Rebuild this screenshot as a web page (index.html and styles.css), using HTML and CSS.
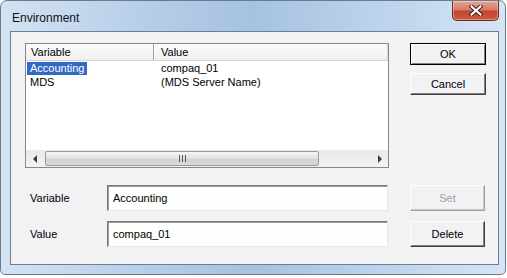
FILE: index.html
```html
<!DOCTYPE html>
<html lang="en">
<head>
    <meta charset="UTF-8">
    <title>Environment</title>
    <link rel="stylesheet" href="styles.css">
</head>
<body>
    <div class="window">
        <div class="titlebar">
            <span class="title">Environment</span>
            <button class="close" aria-label="Close">
                <svg width="14" height="11" viewBox="0 0 14 11">
                    <path d="M2.5 1.5 L11.5 9.5 M11.5 1.5 L2.5 9.5" stroke="#3b1d16" stroke-width="4" stroke-linecap="square"/>
                    <path d="M2.5 1.5 L11.5 9.5 M11.5 1.5 L2.5 9.5" stroke="#ffffff" stroke-width="2.2" stroke-linecap="square"/>
                </svg>
            </button>
        </div>
        <div class="client">
            <div class="top-row">
                <div class="listview">
                    <div class="lv-header">
                        <div class="lv-col col-var">Variable</div>
                        <div class="lv-col col-val">Value</div>
                    </div>
                    <div class="lv-body">
                        <div class="lv-row">
                            <div class="cell col-var"><span class="sel">Accounting</span></div>
                            <div class="cell col-val">compaq_01</div>
                        </div>
                        <div class="lv-row">
                            <div class="cell col-var"><span>MDS</span></div>
                            <div class="cell col-val">(MDS Server Name)</div>
                        </div>
                    </div>
                    <div class="hscroll">
                        <div class="arrow"><span class="tri-left"></span></div>
                        <div class="track">
                            <div class="thumb"><span class="grip"></span></div>
                        </div>
                        <div class="arrow"><span class="tri-right"></span></div>
                    </div>
                </div>
                <div class="btn-col">
                    <button class="btn default">OK</button>
                    <button class="btn">Cancel</button>
                </div>
            </div>
            <div class="field-row">
                <label for="variable">Variable</label>
                <input type="text" id="variable" value="Accounting">
                <button class="btn tall" disabled>Set</button>
            </div>
            <div class="field-row">
                <label for="value">Value</label>
                <input type="text" id="value" value="compaq_01">
                <button class="btn tall">Delete</button>
            </div>
        </div>
    </div>
</body>
</html>
```

FILE: styles.css
```css
body {
    margin: 0;
    background-color: #fff;
    font-family: "Liberation Sans", Arial, sans-serif;
    font-size: 11px;
    color: #000;
}
.window {
    box-sizing: border-box;
    width: 506px;
    height: 275px;
    border: 1px solid #6c7a89;
    border-radius: 7px 7px 5px 5px;
    background: linear-gradient(to right, #d3e3f4 0%, #b5cde8 30%, #a6c2e0 50%, #bcd3ec 75%, #d6e5f5 100%);
    padding-bottom: 8px;
}
.titlebar {
    display: flex;
    align-items: flex-start;
    height: 30px;
}
.title {
    font-size: 12px;
    margin: 10px 0 0 11px;
    color: #111;
}
.close {
    margin: 0 6px 0 auto;
    width: 47px;
    height: 20px;
    border: 1px solid #6a2b22;
    border-top: none;
    border-radius: 0 0 5px 5px;
    background: linear-gradient(#e6a795 0%, #d47a66 45%, #c24431 55%, #cf5a3d 100%);
    box-shadow: inset 0 0 0 1px rgba(255, 255, 255, 0.35);
    padding: 0;
    display: flex;
    align-items: center;
    justify-content: center;
}
.client {
    margin: 0 6px 0 9px;
    border: 1px solid #6d7e92;
    background-color: #f2f1f4;
    padding: 11px 11px 17px 14px;
}
.top-row {
    display: flex;
    gap: 21px;
    margin-bottom: 17px;
}
.listview {
    box-sizing: border-box;
    width: 364px;
    height: 125px;
    border: 1px solid #828790;
    background-color: #fff;
    display: flex;
    flex-direction: column;
}
.lv-header {
    display: flex;
    height: 17px;
    line-height: 16px;
    background: linear-gradient(#fbfbfb, #f0f0f0);
    border-bottom: 1px solid #d5d5d5;
    box-sizing: border-box;
}
.lv-col {
    box-sizing: border-box;
    padding-left: 5px;
}
.lv-header .col-var {
    width: 128px;
    border-right: 1px solid #a0a0a0;
    box-shadow: 1px 0 0 #fff;
}
.lv-header .col-val {
    flex: 1;
    padding-left: 7px;
    border-right: 1px solid #d5d5d5;
}
.lv-body {
    flex: 1;
    padding-top: 1px;
}
.lv-row {
    display: flex;
    height: 14px;
    line-height: 13px;
}
.cell.col-var {
    width: 128px;
    padding-left: 1px;
}
.cell.col-var span {
    display: inline-block;
    padding: 0 3px 0 3px;
}
.cell .sel {
    background-color: #3369c4;
    color: #fff;
}
.cell.col-val {
    padding-left: 6px;
}
.hscroll {
    display: flex;
    height: 17px;
    background: linear-gradient(#e9e9e9, #f3f3f3);
}
.arrow {
    width: 17px;
    display: flex;
    align-items: center;
    justify-content: center;
}
.tri-left {
    border-right: 4px solid #3c3c3c;
    border-top: 4px solid transparent;
    border-bottom: 4px solid transparent;
}
.tri-right {
    border-left: 4px solid #3c3c3c;
    border-top: 4px solid transparent;
    border-bottom: 4px solid transparent;
}
.track {
    flex: 1;
    display: flex;
    align-items: center;
}
.thumb {
    box-sizing: border-box;
    width: 274px;
    height: 15px;
    margin-left: 2px;
    border: 1px solid #9a9a9a;
    border-radius: 2px;
    background: linear-gradient(#f6f6f6, #e2e2e2 50%, #d2d2d2 51%, #d9d9d9);
    display: flex;
    align-items: center;
    justify-content: center;
}
.grip {
    width: 7px;
    height: 7px;
    background: repeating-linear-gradient(to right, #555 0, #555 1px, transparent 1px, transparent 3px);
}
.btn-col {
    display: flex;
    flex-direction: column;
    gap: 8px;
}
.btn {
    box-sizing: border-box;
    width: 76px;
    height: 22px;
    font-family: inherit;
    font-size: 11px;
    color: #000;
    background-color: #f2f1f4;
    border: 1px solid;
    border-color: #fff #404040 #404040 #fff;
    box-shadow: inset -1px -1px 0 #808080;
    padding: 0;
}
.btn.default {
    border: 1px solid #000;
    box-shadow: inset 1px 1px 0 #fff, inset -1px -1px 0 #808080;
}
.btn.tall {
    width: 75px;
    height: 26px;
}
.btn:disabled {
    color: #a0a0a0;
    border-color: #fff #a0a0a0 #a0a0a0 #fff;
    box-shadow: inset -1px -1px 0 #c8c8c8;
}
.field-row {
    display: flex;
    align-items: center;
    height: 26px;
}
.field-row + .field-row {
    margin-top: 10px;
}
.field-row label {
    width: 82px;
    padding-left: 5px;
    box-sizing: border-box;
}
.field-row input {
    box-sizing: border-box;
    width: 281px;
    height: 26px;
    margin: 0 22px 0 0;
    padding: 0 0 0 5px;
    font-family: inherit;
    font-size: 11px;
    color: #000;
    background-color: #fcfffc;
    border: 1px solid;
    border-color: #7a7a7a #e8e8e8 #e8e8e8 #7a7a7a;
    box-shadow: inset 1px 1px 0 #9a9a9a;
    outline: none;
}
```
